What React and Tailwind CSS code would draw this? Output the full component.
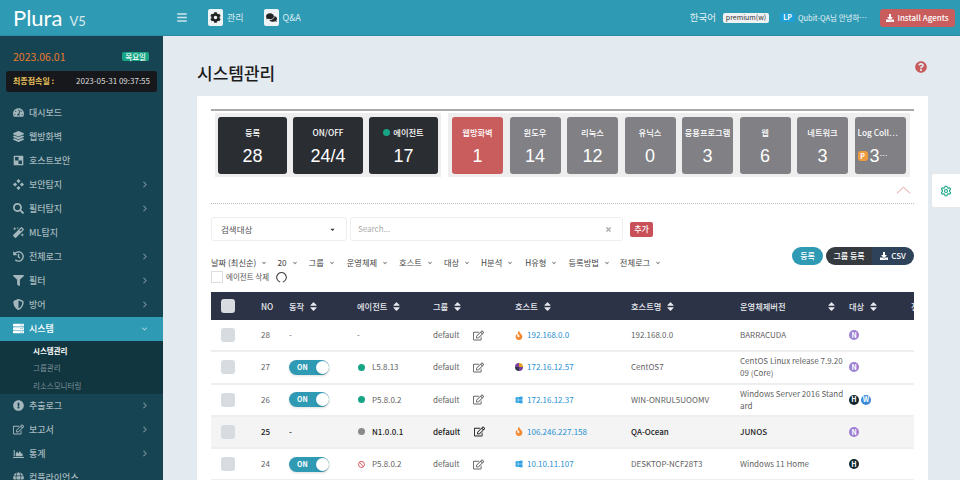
import {
  FaBars, FaCog, FaComments, FaDownload, FaQuestionCircle, FaTachometerAlt, FaLayerGroup,
  FaSearch, FaMagic, FaHistory, FaFilter, FaShieldAlt, FaServer, FaExclamationCircle,
  FaRegEdit, FaGlobe, FaChevronRight, FaChevronDown, FaAngleDown, FaSort, FaFire, FaWindows,
  FaBan, FaTimes, FaCaretDown,
} from 'react-icons/fa'
import { Settings } from 'lucide-react'

const font = { fontFamily: '"Noto Sans CJK KR", "Noto Sans", sans-serif' }

function CheckerIcon({ className }) {
  return (
    <svg viewBox="0 0 16 16" className={className} fill="currentColor">
      <path d="M2 1h12a1 1 0 0 1 1 1v12a1 1 0 0 1-1 1H2a1 1 0 0 1-1-1V2a1 1 0 0 1 1-1z M8 3H3v5h5z M13 8H8v5h5z" fillRule="evenodd" />
    </svg>
  )
}

function DiamondsIcon({ className }) {
  return (
    <svg viewBox="0 0 16 16" className={className} fill="currentColor">
      <path d="M8 0l3 3-3 3-3-3z M3 5l3 3-3 3-3-3z M13 5l3 3-3 3-3-3z M8 10l3 3-3 3-3-3z" />
    </svg>
  )
}

function StatsIcon({ className }) {
  return (
    <svg viewBox="0 0 16 16" className={className} fill="currentColor">
      <path d="M0 13h16v1.5H0z M1 3h1.5v9H1z M4 8l2-3 2 3 2-4 2 4h2v4H4z" />
    </svg>
  )
}

const menuTop = [
  { icon: FaTachometerAlt, label: '대시보드' },
  { icon: FaLayerGroup, label: '웹방화벽' },
  { icon: CheckerIcon, label: '호스트보안' },
  { icon: DiamondsIcon, label: '보안탐지', arrow: true },
  { icon: FaSearch, label: '필터탐지', arrow: true },
  { icon: FaMagic, label: 'ML탐지' },
  { icon: FaHistory, label: '전체로그', arrow: true },
  { icon: FaFilter, label: '필터', arrow: true },
  { icon: FaShieldAlt, label: '방어', arrow: true },
]

const menuBottom = [
  { icon: FaExclamationCircle, label: '추출로그', arrow: true },
  { icon: FaRegEdit, label: '보고서', arrow: true },
  { icon: StatsIcon, label: '통계', arrow: true },
  { icon: FaGlobe, label: '컴플라이언스' },
]

const filters = [
  { label: '날짜 (최신순)', mr: 'mr-[10px]' },
  { label: '20', mr: 'mr-[11px]' },
  { label: '그룹', mr: 'mr-[12px]' },
  { label: '운영체제', mr: 'mr-[11px]' },
  { label: '호스트', mr: 'mr-[11px]' },
  { label: '대상', mr: 'mr-[11px]' },
  { label: 'H분석', mr: 'mr-[12px]' },
  { label: 'H유형', mr: 'mr-[11px]' },
  { label: '등록방법', mr: 'mr-[10px]' },
  { label: '전체로그', mr: '' },
]

const grayTiles = [
  { label: '윈도우', value: 14 },
  { label: '리눅스', value: 12 },
  { label: '유닉스', value: 0 },
  { label: '응용프로그램', value: 3 },
  { label: '웹', value: 6 },
  { label: '네트워크', value: 3 },
]

const rows = [
  { no: 28, on: false, status: null, agent: '-', hostIcon: 'fire', ip: '192.168.0.0', name: '192.168.0.0', os: 'BARRACUDA', badges: ['N'] },
  { no: 27, on: true, status: 'green', agent: 'L5.8.13', hostIcon: 'mix', ip: '172.16.12.57', name: 'CentOS7', os: 'CentOS Linux release 7.9.2009 (Core)', badges: ['N'] },
  { no: 26, on: true, status: 'green', agent: 'P5.8.0.2', hostIcon: 'win', ip: '172.16.12.37', name: 'WIN-ONRUL5UOOMV', os: 'Windows Server 2016 Standard', badges: ['H', 'W'] },
  { no: 25, on: false, status: 'gray', agent: 'N1.0.0.1', hostIcon: 'fire', ip: '106.246.227.158', name: 'QA-Ocean', os: 'JUNOS', badges: ['N'], active: true },
  { no: 24, on: true, status: 'ban', agent: 'P5.8.0.2', hostIcon: 'win', ip: '10.10.11.107', name: 'DESKTOP-NCF28T3', os: 'Windows 11 Home', badges: ['H'] },
]

const gridCols = 'grid grid-cols-[50px_28px_68px_76px_82px_116px_109px_109px_62px_40px] w-[740px] items-center'

function NavItem({ item, active }) {
  const Icon = item.icon
  return (
    <div className={`flex items-center h-6 pl-[13px] pr-[15px] text-[9px] font-medium ${active ? 'bg-[#2f9ab4] text-white' : 'text-[#a3b7bd]'}`}>
      <Icon className="w-[11px] h-[11px] shrink-0" />
      <span className="ml-[5px] flex-1">{item.label}</span>
      {item.arrow && <FaChevronRight className="w-[6px] h-[7px] opacity-60" />}
      {active && <FaChevronDown className="w-[7px] h-[6px] opacity-50" />}
    </div>
  )
}

function Tile({ label, value, className }) {
  return (
    <div className={`flex flex-col items-center rounded-[3px] pt-[7px] text-white ${className}`}>
      <div className="h-[16px] text-[8.25px] font-medium leading-[16px] whitespace-nowrap">{label}</div>
      <div className="mt-[4px] text-[18px] leading-[24px]" style={{ fontFamily: '"Liberation Sans", sans-serif' }}>{value}</div>
    </div>
  )
}

function SortHead({ children, className = '' }) {
  return (
    <div className={`flex items-center whitespace-nowrap ${className}`}>
      {children}
      <FaSort className="ml-[6px] w-[7px] h-[11px]" />
    </div>
  )
}

function HostIcon({ kind }) {
  if (kind === 'fire') return <FaFire className="w-[8px] h-[9px] text-[#f58a33]" />
  if (kind === 'win') return <FaWindows className="w-[8px] h-[8px] text-[#2a9fe0]" />
  return (
    <svg viewBox="0 0 16 16" className="w-[8px] h-[8px]">
      <path d="M8 8 L8 0 A8 8 0 0 1 16 8 Z" fill="#e0a020" />
      <path d="M8 8 L16 8 A8 8 0 0 1 8 16 Z" fill="#7a3fa0" />
      <path d="M8 8 L8 16 A8 8 0 0 1 0 8 Z" fill="#333a46" />
      <path d="M8 8 L0 8 A8 8 0 0 1 8 0 Z" fill="#7a3fa0" />
    </svg>
  )
}

function Badge({ letter }) {
  const color = letter === 'N' ? 'bg-[#9b7fd4]' : letter === 'W' ? 'bg-[#3a8ad8]' : 'bg-[#12262e]'
  return (
    <span className={`flex items-center justify-center w-[10px] h-[10px] rounded-full text-[7px] font-bold text-white ${color}`}>{letter}</span>
  )
}

function Row({ row }) {
  const text = row.active ? 'text-[#222] font-medium' : 'text-[#5f5f5f]'
  return (
    <div className={`${gridCols} h-[32.25px] border-b-2 border-[#eeeeee] text-[8px] ${text} ${row.active ? 'bg-[#f4f4f4]' : 'bg-white'}`}>
      <div className="pl-[10px]">
        <div className="w-[14px] h-[14px] rounded-[3px] bg-[#d8dce0]" />
      </div>
      <div>{row.no}</div>
      <div>
        {row.on ? (
          <div className="flex items-center w-[40px] h-[15px] rounded-full bg-[#2f9ab4] pl-[8px] justify-between shadow-sm">
            <span className="text-[7px] font-bold text-white">ON</span>
            <span className="w-[13px] h-[13px] rounded-full bg-white shadow" />
          </div>
        ) : '-'}
      </div>
      <div className="flex items-center">
        {row.status === 'green' && <span className="w-[7px] h-[7px] rounded-full bg-[#17a585] ml-[1px] mr-[7px]" />}
        {row.status === 'gray' && <span className="w-[7px] h-[7px] rounded-full bg-[#8a8a8a] ml-[1px] mr-[7px]" />}
        {row.status === 'ban' && <FaBan className="w-[7px] h-[7px] text-[#d9606a] ml-[1px] mr-[7px]" />}
        <span>{row.agent}</span>
      </div>
      <div className="flex items-center">
        <span>default</span>
        <FaRegEdit className={`ml-[14px] w-[11px] h-[11px] ${row.active ? 'text-[#222]' : 'text-[#666]'}`} />
      </div>
      <div className="flex items-center font-normal">
        <HostIcon kind={row.hostIcon} />
        <span className="ml-[4px] text-[#2a8fd0]">{row.ip}</span>
      </div>
      <div className="whitespace-nowrap">{row.name}</div>
      <div className="pr-[2px] leading-[12px] break-all">{row.os}</div>
      <div className="flex gap-[2px]">
        {row.badges.map((b) => <Badge key={b} letter={b} />)}
      </div>
      <div />
    </div>
  )
}

export default function App() {
  return (
    <div className="w-[960px] h-[480px] overflow-hidden flex flex-col bg-[#e3eaf0] relative" style={font}>
      <header className="h-[36px] shrink-0 flex items-center bg-[#2f9ab4] border-b border-[#2a8aa2] text-white">
        <div className="w-[163px] flex items-baseline pl-[13px]">
          <span className="text-[22px] leading-none" style={{ fontFamily: 'Lato, sans-serif' }}>Plura</span>
          <span className="ml-[7px] text-[13px] leading-none opacity-80" style={{ fontFamily: 'Lato, sans-serif' }}>V5</span>
        </div>
        <FaBars className="ml-[12px] w-[14px] h-[11px] text-[#cfe6ec]" />
        <div className="ml-[19px] flex items-center text-[9px] text-[#d8edf2]">
          <span className="flex items-center justify-center w-[15px] h-[17px] rounded-[2px] bg-[#eef3f5]">
            <FaCog className="w-[11px] h-[11px] text-[#222]" />
          </span>
          <span className="ml-[4px]">관리</span>
        </div>
        <div className="ml-[20px] flex items-center text-[9px] text-[#d8edf2]">
          <span className="flex items-center justify-center w-[15px] h-[17px] rounded-[2px] bg-[#eef3f5]">
            <FaComments className="w-[11px] h-[11px] text-[#222]" />
          </span>
          <span className="ml-[4px]">Q&amp;A</span>
        </div>
        <div className="ml-auto flex items-center pr-[5px]">
          <span className="text-[9.5px] text-[#e6f3f6]">한국어</span>
          <span className="ml-[7px] w-[46px] h-[10px] flex items-center justify-center rounded-[2px] bg-[#eef2f4] text-[#333] text-[7px]">premium(w)</span>
          <span className="ml-[11px] w-[15px] h-[9px] flex items-center justify-center rounded-[2px] bg-[#1f9fd8] text-white text-[7px] font-bold">LP</span>
          <span className="ml-[3px] w-[68px] text-[7.5px] text-[#e6f3f6] whitespace-nowrap">Qubit-QA님 안녕하⋯</span>
          <span className="ml-[14px] w-[75px] flex items-center justify-center h-[18px] rounded-[3px] bg-[#c95c5c] text-[8px] font-medium">
            <FaDownload className="w-[8px] h-[8px] mr-[3px]" />
            Install Agents
          </span>
        </div>
      </header>

      <div className="flex flex-1 min-h-0">
        <aside className="w-[163px] shrink-0 bg-[#174452] overflow-hidden">
          <div className="flex items-center justify-between pl-[13px] pr-[14px] pt-[13px]">
            <span className="text-[10.5px] text-[#e8792a]">2023.06.01</span>
            <span className="rounded-[2px] bg-[#17a585] px-[3px] text-[7.5px] leading-[9px] font-medium text-white">목요일</span>
          </div>
          <div className="mt-[6px] mx-[6px] h-[21px] flex items-center justify-between rounded-[3px] bg-[#17181c] px-[7px]">
            <span className="text-[8px] font-bold text-[#e8c05a]">최종접속일 :</span>
            <span className="text-[8px] text-[#dcdcdc] whitespace-nowrap">2023-05-31 09:37:55</span>
          </div>
          <div className="mt-[9px]">
            {menuTop.map((m) => <NavItem key={m.label} item={m} />)}
            <NavItem item={{ icon: FaServer, label: '시스템' }} active />
            <div className="bg-[#113640] h-[53px] pl-[33px] pt-[1px] text-[7.5px] leading-[17.5px] text-[#7d9199]">
              <div className="font-bold text-white">시스템관리</div>
              <div>그룹관리</div>
              <div>리소스모니터링</div>
            </div>
            {menuBottom.map((m) => <NavItem key={m.label} item={m} />)}
          </div>
        </aside>

        <main className="flex-1 min-w-0 pl-[34px] pr-[32px]">
          <div className="flex items-center justify-between h-[60px] pt-[14px]">
            <h1 className="text-[17px] font-medium text-[#1c1c1c]">시스템관리</h1>
            <FaQuestionCircle className="w-[12px] h-[12px] mt-[-12px] mr-[1px] text-[#c95c5c]" />
          </div>

          <section className="bg-white h-[400px] pt-[13px] px-[14px]">
            <div className="h-[2px] bg-[#aaaaaa]" />
            <div className="mt-[2px] ml-[4px] flex gap-[7px]">
              <div className="w-[226px] h-[64px] bg-[#eeeeee] pt-[4px] px-[3px] flex gap-[6px]">
                <Tile label="등록" value="28" className="w-[69px] h-[57px] bg-[#2a2d32]" />
                <Tile label="ON/OFF" value="24/4" className="w-[70px] h-[57px] bg-[#2a2d32]" />
                <Tile
                  label={<span className="flex items-center"><span className="w-[7px] h-[7px] rounded-full bg-[#17a585] mr-[3px]" />에이전트</span>}
                  value="17"
                  className="w-[69px] h-[57px] bg-[#2a2d32]"
                />
              </div>
              <div className="w-[462px] h-[64px] bg-[#eeeeee] pt-[4px] px-[4px] flex gap-[6.5px]">
                <Tile label="웹방화벽" value="1" className="w-[51px] h-[57px] bg-[#c95c5c]" />
                {grayTiles.map((t) => (
                  <Tile key={t.label} label={t.label} value={t.value} className="w-[51px] h-[57px] bg-[#808085]" />
                ))}
                <div className="w-[51px] h-[57px] rounded-[3px] bg-[#808085] pt-[7px] pl-[3px] text-white overflow-hidden">
                  <div className="h-[16px] text-[8.25px] font-medium leading-[16px] whitespace-nowrap">Log Coll⋯</div>
                  <div className="mt-[4px] flex items-center h-[24px]">
                    <span className="flex items-center justify-center w-[10px] h-[10px] rounded-[3px] bg-[#f09a3e] text-[7px] font-bold">P</span>
                    <span className="ml-[2px] text-[18px]" style={{ fontFamily: '"Liberation Sans", sans-serif' }}>3</span>
                    <span className="text-[8px]">⋯</span>
                  </div>
                </div>
              </div>
            </div>
            <div className="flex justify-end h-[26px] items-center pr-[3px]">
              <svg viewBox="0 0 16 8" className="w-[15px] h-[8px]" fill="none" stroke="#e09a9a" strokeWidth="1">
                <path d="M1 7.5 L8 1 L15 7.5" />
              </svg>
            </div>
            <div className="border-t border-dotted border-[#bbbbbb]" />

            <div className="mt-[13px] flex items-center">
              <div className="w-[136px] h-[24px] flex items-center justify-between border border-[#eeeeee] rounded-[3px] pl-[9px] pr-[10px] text-[8.5px] text-[#555]">
                검색대상
                <FaCaretDown className="w-[7px] h-[7px] text-[#333]" />
              </div>
              <div className="ml-[3px] w-[273px] h-[24px] flex items-center justify-between border border-[#eeeeee] rounded-[3px] pl-[7px] pr-[10px] text-[8px] text-[#aaaaaa]">
                Search...
                <FaTimes className="w-[7px] h-[7px] text-[#aaaaaa]" />
              </div>
              <span className="ml-[7px] w-[23px] h-[15px] flex items-center justify-center rounded-[2px] bg-[#c95058] text-[8px] font-medium text-white">추가</span>
            </div>

            <div className="mt-[6px] flex items-start justify-between h-[45px]">
              <div className="pt-[8px]">
                <div className="flex items-center h-[15px] text-[8.25px] text-[#444]">
                  {filters.map((f) => (
                    <span key={f.label} className={`flex items-center whitespace-nowrap ${f.mr}`}>
                      {f.label}
                      <FaAngleDown className="ml-[5px] w-[6px] h-[6px] text-[#888]" />
                    </span>
                  ))}
                </div>
                <div className="flex items-center h-[14px] text-[7.5px] text-[#555]">
                  <span className="w-[12px] h-[12px] border border-[#dddddd] mr-[3px]" />
                  에이전트 삭제
                  <svg viewBox="0 0 16 16" className="ml-[7px] w-[11px] h-[11px]" fill="none" stroke="#444" strokeWidth="1.6">
                    <path d="M6 14.5 A7 7 0 1 1 10 14.5" />
                  </svg>
                </div>
              </div>
              <div className="flex items-center text-[8px] font-medium text-white">
                <span className="w-[31px] h-[18px] flex items-center justify-center rounded-full bg-[#2f9ab4]">등록</span>
                <span className="ml-[3px] w-[46px] h-[18px] flex items-center justify-center rounded-l-full bg-[#343a40]">그룹 등록</span>
                <span className="w-[42px] h-[18px] flex items-center justify-center rounded-r-full bg-[#2e4359]">
                  <FaDownload className="w-[8px] h-[8px] mr-[3px]" />CSV
                </span>
              </div>
            </div>

            <div className="overflow-hidden">
              <div className={`${gridCols} h-[28px] bg-[#2c3347] text-[8.25px] font-medium text-[#e8eaee]`}>
                <div className="pl-[10px]">
                  <div className="w-[14px] h-[14px] rounded-[3px] bg-[#d8dce0]" />
                </div>
                <div>NO</div>
                <SortHead>동작</SortHead>
                <SortHead>에이전트</SortHead>
                <SortHead>그룹</SortHead>
                <SortHead>호스트</SortHead>
                <SortHead>호스트명</SortHead>
                <SortHead className="w-[95px] justify-between">운영체제버전</SortHead>
                <SortHead>대상</SortHead>
                <div>전</div>
              </div>
              {rows.map((r) => <Row key={r.no} row={r} />)}
            </div>
          </section>
        </main>
      </div>

      <div className="absolute right-0 top-[173px] w-[29px] h-[35px] flex items-center justify-center rounded-l-[3px] bg-white border border-r-0 border-[#e8e8e8]">
        <Settings className="w-[12px] h-[12px] text-[#17a585]" strokeWidth={2.2} />
      </div>
    </div>
  )
}
